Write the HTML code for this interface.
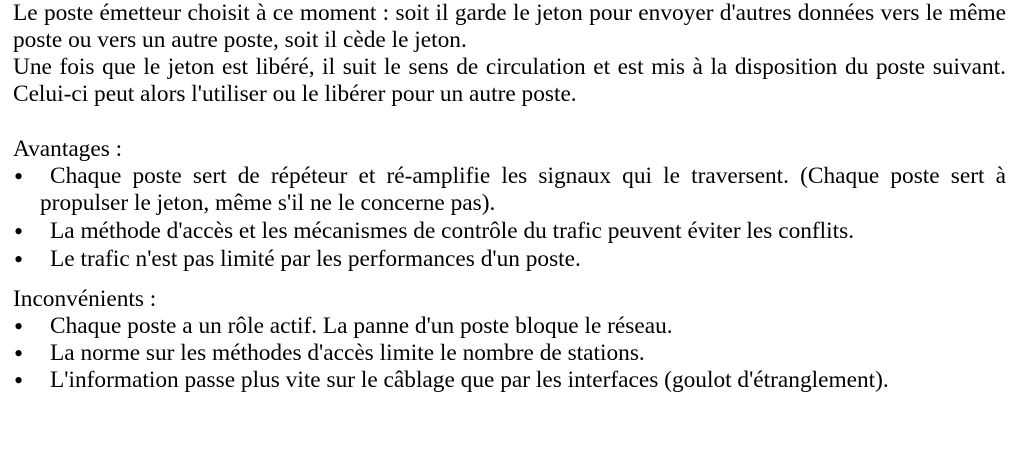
<!DOCTYPE html>
<html><head><meta charset="utf-8"><style>
body{margin:0;background:#fff;width:1026px;height:449px;overflow:hidden;position:relative;font-family:"Liberation Serif",serif;font-size:23.35px;color:#000}
.l{position:absolute;height:27px;line-height:27px;white-space:nowrap}
.j{text-align:justify;text-align-last:justify;white-space:normal}
.b{position:absolute;left:14px;font-size:26px}
</style></head><body>
<div class="l j" style="top:0px;left:13px;width:993px">Le poste émetteur choisit à ce moment : soit il garde le jeton pour envoyer d'autres données vers le même</div>
<div class="l" style="top:27px;left:13px">poste ou vers un autre poste, soit il cède le jeton.</div>
<div class="l j" style="top:54px;left:13px;width:993px">Une fois que le jeton est libéré, il suit le sens de circulation et est mis à la disposition du poste suivant.</div>
<div class="l" style="top:81px;left:13px">Celui-ci peut alors l'utiliser ou le libérer pour un autre poste.</div>
<div class="l" style="top:136px;left:13px">Avantages :</div>
<div class="l b" style="top:163px">•</div>
<div class="l j" style="top:163px;left:50px;width:956px">Chaque poste sert de répéteur et ré-amplifie les signaux qui le traversent. (Chaque poste sert à</div>
<div class="l" style="top:190px;left:40px">propulser le jeton, même s'il ne le concerne pas).</div>
<div class="l b" style="top:218px">•</div>
<div class="l" style="top:218px;left:50px">La méthode d'accès et les mécanismes de contrôle du trafic peuvent éviter les conflits.</div>
<div class="l b" style="top:246px">•</div>
<div class="l" style="top:246px;left:50px">Le trafic n'est pas limité par les performances d'un poste.</div>
<div class="l" style="top:286px;left:13px">Inconvénients :</div>
<div class="l b" style="top:313px">•</div>
<div class="l" style="top:313px;left:50px">Chaque poste a un rôle actif. La panne d'un poste bloque le réseau.</div>
<div class="l b" style="top:340px">•</div>
<div class="l" style="top:340px;left:50px">La norme sur les méthodes d'accès limite le nombre de stations.</div>
<div class="l b" style="top:367px">•</div>
<div class="l" style="top:367px;left:50px">L'information passe plus vite sur le câblage que par les interfaces (goulot d'étranglement).</div>
</body></html>
